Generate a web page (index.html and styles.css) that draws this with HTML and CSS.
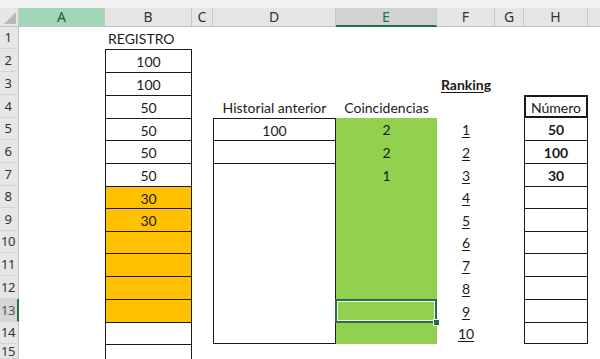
FILE: index.html
```html
<!DOCTYPE html>
<html lang="es">
<head>
<meta charset="utf-8">
<title>Registro</title>
<link rel="stylesheet" href="styles.css">
</head>
<body>
<div class="sheet">
  <div class="strip"></div>
  <div class="r hdr">
    <div class="corner"><span class="tri"></span></div>
    <div class="ch sel-a">A</div>
    <div class="ch">B</div>
    <div class="ch">C</div>
    <div class="ch">D</div>
    <div class="ch sel-e">E</div>
    <div class="ch">F</div>
    <div class="ch">G</div>
    <div class="ch">H</div>
    <div class="ch last"></div>
  </div>

  <div class="r h22">
    <div class="rh">1</div><div></div><div class="c left">REGISTRO</div><div></div><div></div><div></div><div></div><div></div><div></div><div></div>
  </div>
  <div class="r h23">
    <div class="rh">2</div><div></div><div class="c bx">100</div><div></div><div></div><div></div><div></div><div></div><div></div><div></div>
  </div>
  <div class="r h23">
    <div class="rh">3</div><div></div><div class="c bx">100</div><div></div><div></div><div></div><div class="c b u">Ranking</div><div></div><div></div><div></div>
  </div>
  <div class="r h23">
    <div class="rh">4</div><div></div><div class="c bx">50</div><div></div><div class="c">Historial anterior</div><div class="c">Coincidencias</div><div></div><div></div><div class="c thick">Número</div><div></div>
  </div>
  <div class="r h22">
    <div class="rh">5</div><div></div><div class="c bx">50</div><div></div><div class="c bx">100</div><div class="c g">2</div><div class="c u">1</div><div></div><div class="c b bs">50</div><div></div>
  </div>
  <div class="r h23">
    <div class="rh">6</div><div></div><div class="c bx">50</div><div></div><div class="c bx"></div><div class="c g">2</div><div class="c u">2</div><div></div><div class="c b bx">100</div><div></div>
  </div>
  <div class="r h23">
    <div class="rh">7</div><div></div><div class="c bx">50</div><div></div><div class="c bx"></div><div class="c g">1</div><div class="c u">3</div><div></div><div class="c b bx">30</div><div></div>
  </div>
  <div class="r h22">
    <div class="rh">8</div><div></div><div class="c bx o">30</div><div></div><div class="c bs"></div><div class="c g"></div><div class="c u">4</div><div></div><div class="c bx"></div><div></div>
  </div>
  <div class="r h23">
    <div class="rh">9</div><div></div><div class="c bx o">30</div><div></div><div class="c bs"></div><div class="c g"></div><div class="c u">5</div><div></div><div class="c bx"></div><div></div>
  </div>
  <div class="r h22">
    <div class="rh">10</div><div></div><div class="c bx o"></div><div></div><div class="c bs"></div><div class="c g"></div><div class="c u">6</div><div></div><div class="c bx"></div><div></div>
  </div>
  <div class="r h23">
    <div class="rh">11</div><div></div><div class="c bx o"></div><div></div><div class="c bs"></div><div class="c g"></div><div class="c u">7</div><div></div><div class="c bx"></div><div></div>
  </div>
  <div class="r h23">
    <div class="rh">12</div><div></div><div class="c bx o"></div><div></div><div class="c bs"></div><div class="c g"></div><div class="c u">8</div><div></div><div class="c bx"></div><div></div>
  </div>
  <div class="r h23">
    <div class="rh active">13</div><div></div><div class="c bx o"></div><div></div><div class="c bs"></div><div class="c g cur"><span class="selbox"><span class="handle"></span></span></div><div class="c u">9</div><div></div><div class="c bx"></div><div></div>
  </div>
  <div class="r h22">
    <div class="rh">14</div><div></div><div class="c bx"></div><div></div><div class="c bs bb"></div><div class="c g"></div><div class="c u">10</div><div></div><div class="c bx bb"></div><div></div>
  </div>
  <div class="r h15">
    <div class="rh">15</div><div></div><div class="c bx"></div><div></div><div></div><div></div><div></div><div></div><div></div><div></div>
  </div>
</div>
</body>
</html>
```

FILE: styles.css
```css
* { box-sizing: border-box; }
html, body { margin: 0; padding: 0; background: #fff; }
body { width: 600px; height: 359px; overflow: hidden; }

.sheet {
  width: 600px;
  font-family: "Lato", "Liberation Sans", sans-serif;
  font-size: 14px;
  color: #1b1b1b;
}

.strip { height: 8px; background: #f1f1f1; }

.r {
  display: grid;
  grid-template-columns: 19px 86px 87px 21px 123px 101px 58px 29px 64px 12px;
}
.h22 { height: 22px; }
.h23 { height: 23px; }
.h15 { height: 15px; }

.hdr {
  height: 19px;
  background: #e6e6e6;
  border-bottom: 1px solid #c3c3c3;
  font-family: "Noto Sans", "Open Sans", sans-serif;
  font-size: 14px;
  color: #333;
}
.corner {
  display: flex;
  align-items: flex-end;
  justify-content: flex-end;
  padding: 0 2px 2px 0;
  border-right: 1px solid #c8c8c8;
}
.tri {
  width: 0; height: 0;
  border-left: 12px solid transparent;
  border-bottom: 12px solid #b9b9b9;
}
.ch {
  display: flex;
  align-items: center;
  justify-content: center;
  border-right: 1px solid #c8c8c8;
  line-height: 1;
}
.ch.last { border-right: none; }
.sel-a { background: #a1d6b6; color: #1f5c3a; }
.sel-e { background: #d3d3d3; color: #217346; border-bottom: 2px solid #217346; margin-bottom: -1px; }

.rh {
  background: #e6e6e6;
  border-right: 1px solid #c3c3c3;
  border-bottom: 1px solid #d4d4d4;
  font-family: "Noto Sans", "Open Sans", sans-serif;
  font-size: 13px;
  letter-spacing: -0.5px;
  color: #333;
  display: flex;
  align-items: center;
  justify-content: center;
  padding-right: 2px;
  white-space: nowrap;
  line-height: 1;
}
.rh.active { background: #d6d6d6; border-right: 2px solid #217346; color: #555; padding-right: 1px; }

.c {
  display: flex;
  align-items: center;
  justify-content: center;
  padding-top: 2px;
  white-space: nowrap;
  line-height: 1;
}
.c.left { justify-content: flex-start; padding-left: 3px; }

.bx { border: 1px solid #1a1a1a; border-bottom: none; }
.bs { border-left: 1px solid #1a1a1a; border-right: 1px solid #1a1a1a; }
.bb { border-bottom: 1px solid #1a1a1a; }
.thick { border: 2px solid #1a1a1a; }

.o { background: #ffc000; }
.g { background: #92d050; }
.b { font-weight: 700; }
.u { text-decoration: underline; text-underline-offset: 2px; }

.cur { position: relative; }
.selbox {
  position: absolute;
  left: -1px; top: 0; right: 0; bottom: -1px;
  border: 2px solid #217346;
  box-shadow: inset 0 0 0 1px #f4fff0;
}
.handle {
  position: absolute;
  right: -5px; bottom: -5px;
  width: 7px; height: 7px;
  background: #217346;
  border: 1px solid #fff;
}
```
